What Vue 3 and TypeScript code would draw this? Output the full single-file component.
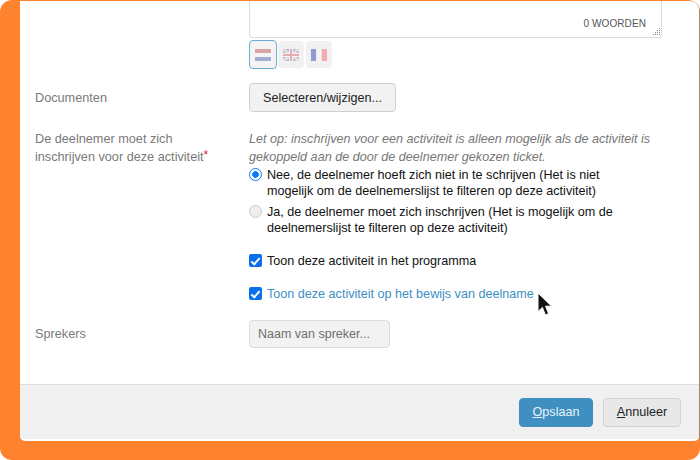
<script setup lang="ts">
import { ref } from 'vue'

const attend = ref('nee')
const flags = ['nl', 'en', 'fr']
</script>

<template>
  <div class="frame">
    <div class="panel">
      <div class="body">
        <div class="row top-row">
          <div class="label"></div>
          <div class="field">
            <div class="textarea">
              <span class="count">0 WOORDEN</span>
              <svg class="grip" width="9" height="9" viewBox="0 0 9 9">
                <g fill="#8a8a8a">
                  <rect x="7" y="0" width="1" height="1" />
                  <rect x="5" y="2" width="1" height="1" />
                  <rect x="7" y="2" width="1" height="1" />
                  <rect x="3" y="4" width="1" height="1" />
                  <rect x="5" y="4" width="1" height="1" />
                  <rect x="7" y="4" width="1" height="1" />
                  <rect x="1" y="6" width="1" height="1" />
                  <rect x="3" y="6" width="1" height="1" />
                  <rect x="5" y="6" width="1" height="1" />
                  <rect x="7" y="6" width="1" height="1" />
                </g>
              </svg>
            </div>
            <div class="flags">
              <button v-for="f in flags" :key="f" class="flag" :class="{ active: f === 'nl' }" type="button">
                <svg v-if="f === 'nl'" width="16" height="12" viewBox="0 0 16 12">
                  <rect width="16" height="4" fill="#d9a3a6" />
                  <rect y="4" width="16" height="4" fill="#f4f4f4" />
                  <rect y="8" width="16" height="4" fill="#a3aed2" />
                </svg>
                <svg v-else-if="f === 'en'" width="16" height="12" viewBox="0 0 16 12">
                  <rect width="16" height="12" fill="#b4bad6" />
                  <path d="M0 0L16 12M16 0L0 12" stroke="#f4f4f4" stroke-width="2.4" />
                  <path d="M0 0L16 12M16 0L0 12" stroke="#e2b4b8" stroke-width="0.8" />
                  <path d="M8 0V12M0 6H16" stroke="#f4f4f4" stroke-width="4" />
                  <path d="M8 0V12M0 6H16" stroke="#e2acb0" stroke-width="2" />
                </svg>
                <svg v-else width="16" height="12" viewBox="0 0 16 12">
                  <rect width="5.3" height="12" fill="#8f9ccc" />
                  <rect x="5.3" width="5.4" height="12" fill="#f4f4f4" />
                  <rect x="10.7" width="5.3" height="12" fill="#f6a9ae" />
                </svg>
              </button>
            </div>
          </div>
        </div>

        <div class="row docs-row">
          <div class="label center">Documenten</div>
          <div class="field">
            <button class="btn-select" type="button">Selecteren/wijzigen...</button>
          </div>
        </div>

        <div class="row signup-row">
          <div class="label">De deelnemer moet zich<br />inschrijven voor deze activiteit<span class="req">*</span></div>
          <div class="field">
            <p class="hint">Let op: inschrijven voor een activiteit is alleen mogelijk als de activiteit is gekoppeld aan de door de deelnemer gekozen ticket.</p>
            <label class="check-line">
              <input v-model="attend" class="box radio" type="radio" name="attend" value="nee" />
              <span class="choice">Nee, de deelnemer hoeft zich niet in te schrijven (Het is niet mogelijk om de deelnemerslijst te filteren op deze activiteit)</span>
            </label>
            <label class="check-line second">
              <input v-model="attend" class="box radio" type="radio" name="attend" value="ja" />
              <span class="choice">Ja, de deelnemer moet zich inschrijven (Het is mogelijk om de deelnemerslijst te filteren op deze activiteit)</span>
            </label>
            <label class="check-line program">
              <input class="box check" type="checkbox" checked />
              <span>Toon deze activiteit in het programma</span>
            </label>
            <label class="check-line proof">
              <input class="box check" type="checkbox" checked />
              <span>Toon deze activiteit op het bewijs van deelname</span>
              <svg class="cursor" width="18" height="26" viewBox="0 0 18 26">
                <path d="M1 1V19.5L5.4 15.4L8.4 23L11.6 21.6L8.6 14.2H14.6Z" fill="#111" stroke="#fff" stroke-width="1" stroke-linejoin="round" />
              </svg>
            </label>
          </div>
        </div>

        <div class="row speakers-row">
          <div class="label center">Sprekers</div>
          <div class="field">
            <input class="speaker" type="text" placeholder="Naam van spreker..." />
          </div>
        </div>
      </div>

      <div class="footer">
        <button class="btn primary" type="button"><u>O</u>pslaan</button>
        <button class="btn ghost" type="button"><u>A</u>nnuleer</button>
      </div>
    </div>
  </div>
</template>

<style>
html,
body {
  margin: 0;
  background: #fff;
}
</style>

<style scoped>
.frame {
  box-sizing: border-box;
  width: 700px;
  height: 460px;
  padding: 1px 0 19px 20px;
  background: #ff832e;
  border-radius: 12px;
  font-family: "Liberation Sans", Arial, sans-serif;
  overflow: hidden;
}
.panel {
  display: flex;
  flex-direction: column;
  box-sizing: border-box;
  height: 100%;
  padding-bottom: 2px;
  background: #fff;
  border-right: 1px solid #b08660;
  border-radius: 0 9px 5px 5px;
  overflow: hidden;
}
.body {
  flex: 1;
  min-height: 0;
}
.row {
  display: flex;
}
.label {
  box-sizing: border-box;
  width: 229px;
  padding-left: 15px;
  font-size: 12.7px;
  line-height: 18px;
  color: #7a7a7a;
}
.label.center {
  align-self: center;
}
.field {
  width: 413px;
}
.req {
  position: relative;
  top: -2px;
  line-height: 0;
  color: #e8202c;
  font-size: 12px;
}
.textarea {
  position: relative;
  box-sizing: border-box;
  height: 37px;
  border: 1px solid #dcdcdc;
  border-top: 0;
  border-radius: 0 0 4px 4px;
}
.count {
  position: absolute;
  right: 15px;
  bottom: 7px;
  font-size: 10px;
  letter-spacing: 0.1px;
  line-height: 13px;
  color: #555;
}
.grip {
  position: absolute;
  right: 0;
  bottom: 0;
}
.flags {
  display: flex;
  gap: 1px;
  margin-top: 2px;
}
.flag {
  display: flex;
  align-items: center;
  justify-content: center;
  box-sizing: border-box;
  width: 28px;
  height: 29px;
  margin: 0;
  padding: 0;
  border: 1px solid transparent;
  border-radius: 4px;
  background: #f1f1f1;
}
.flag + .flag {
  width: 26px;
  height: 27px;
  margin-top: 1px;
  border: 0;
}
.flag + .flag + .flag {
  margin-left: 1px;
}
.flag.active {
  border-color: #6aaed6;
  background: #f4f4f4;
}
.docs-row {
  margin-top: 14px;
}
.btn-select {
  box-sizing: border-box;
  width: 147px;
  height: 29px;
  padding: 0;
  border: 1px solid #cfcfcf;
  border-radius: 4px;
  background: #f2f2f2;
  font: 12.6px "Liberation Sans", Arial, sans-serif;
  color: #222;
}
.signup-row {
  margin-top: 18px;
}
.hint {
  margin: 0 0 1px;
  font-size: 12.6px;
  line-height: 18px;
  font-style: italic;
  color: #777;
}
.check-line {
  display: flex;
  align-items: flex-start;
  font-size: 12.6px;
  line-height: 16px;
  color: #111;
}
.choice {
  max-width: 375px;
}
.box {
  flex: none;
  box-sizing: border-box;
  width: 13px;
  height: 13px;
  margin: 1px 5px 0 0;
  appearance: none;
  position: relative;
}
.radio {
  border: 1px solid #c9c9c9;
  border-radius: 50%;
  background: #eee;
}
.radio:checked {
  border: 1.5px solid #0a7aff;
  background: radial-gradient(circle, #0a7aff 0 3px, #fff 3.6px);
}
.check {
  border-radius: 2px;
  background: #0a6fe8;
}
.check::after {
  content: "";
  position: absolute;
  left: 4px;
  top: 1.5px;
  width: 3px;
  height: 7px;
  border: solid #fff;
  border-width: 0 2px 2px 0;
  transform: rotate(42deg);
}
.second {
  margin-top: 5px;
}
.program {
  margin-top: 17px;
}
.proof {
  position: relative;
  margin-top: 17px;
  color: #3d8fc4;
}
.cursor {
  position: absolute;
  left: 288px;
  top: 6px;
}
.speakers-row {
  margin-top: 18px;
}
.speaker {
  box-sizing: border-box;
  width: 141px;
  height: 28px;
  padding: 0 8px;
  border: 1px solid #dcdcdc;
  border-radius: 4px;
  background: #f2f2f2;
  font: 12.5px "Liberation Sans", Arial, sans-serif;
}
.speaker::placeholder {
  color: #6f6f6f;
  opacity: 1;
}
.footer {
  flex: none;
  display: flex;
  justify-content: flex-end;
  align-items: center;
  gap: 10px;
  height: 54px;
  padding-right: 18px;
  background: #f0f0f0;
  border-top: 1px solid #dedede;
}
.btn {
  box-sizing: border-box;
  height: 29px;
  padding: 0;
  border-radius: 4px;
  font: 12.6px "Liberation Sans", Arial, sans-serif;
}
.primary {
  width: 74px;
  border: 1px solid #3f8fc0;
  background: #3f8fc0;
  color: #e8f2f9;
}
.ghost {
  width: 78px;
  border: 1px solid #d2d2d2;
  background: #e8e8e8;
  color: #222;
}
</style>
